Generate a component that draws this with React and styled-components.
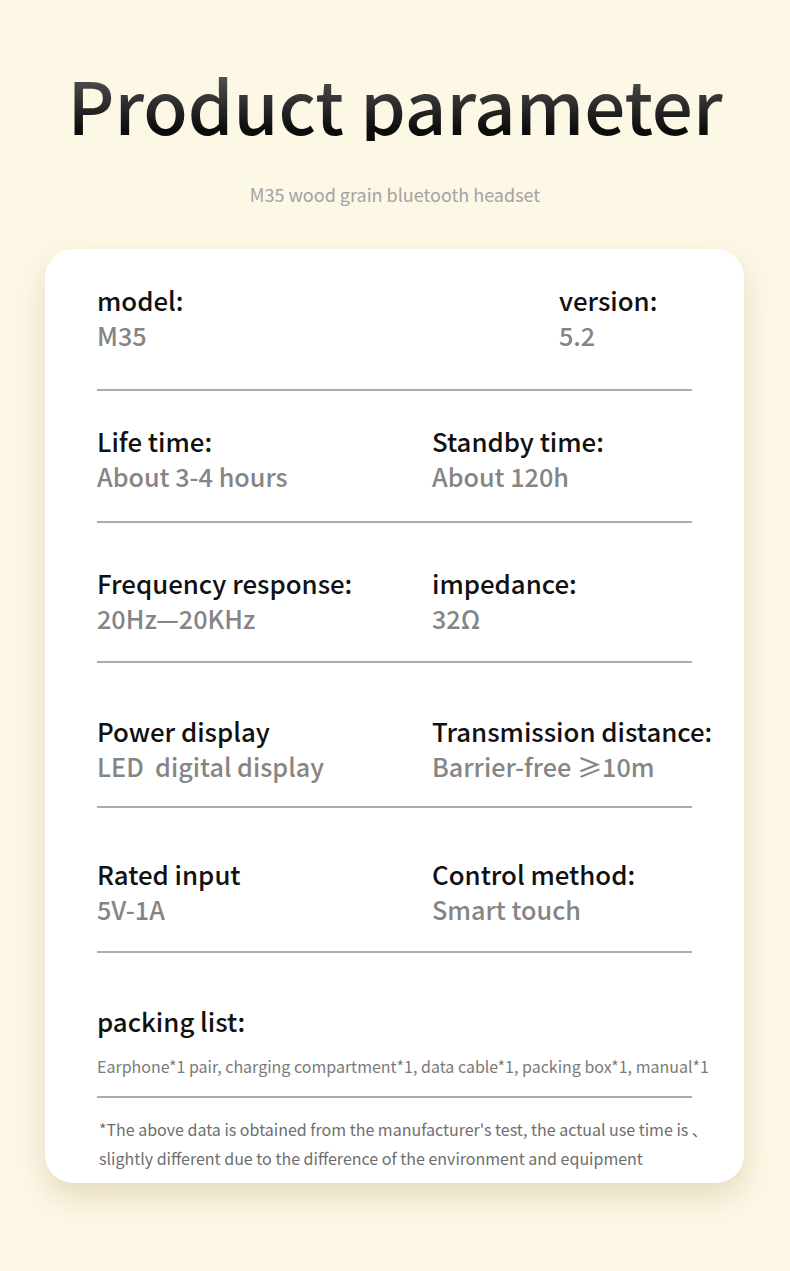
import React from "react";
import styled, { createGlobalStyle } from "styled-components";

const Global = createGlobalStyle`
  html, body { margin: 0; padding: 0; background: #fdf7e6; }
  body { font-family: "Noto Sans CJK SC", "Noto Sans", sans-serif; }
`;

const Page = styled.div`
  width: 790px;
  min-height: 1271px;
  background: #fdf7e6;
  padding-top: 67px;
  box-sizing: border-box;
`;

const Title = styled.h1`
  margin: 0;
  text-align: center;
  font-size: 72.5px;
  line-height: 74px;
  font-weight: 500;
  background: linear-gradient(180deg, #5c5c5c 0%, #0c0c0c 85%);
  -webkit-background-clip: text;
  background-clip: text;
  color: transparent;
`;

const Subtitle = styled.p`
  margin: 39px 0 0;
  text-align: center;
  font-size: 18px;
  line-height: 28px;
  color: #a3a3a3;
`;

const Card = styled.div`
  margin: 41px 46px 0 45px;
  background: #fff;
  border-radius: 28px;
  padding: 0 52px 10px;
  box-shadow: 0 14px 30px rgba(190, 175, 130, 0.38);
`;

const Section = styled.div`
  padding-top: ${(p) => p.$pt}px;
  padding-bottom: ${(p) => p.$pb}px;
  border-bottom: ${(p) => (p.$noLine ? "none" : "2px solid #acacac")};
`;

const Grid = styled.div`
  display: grid;
  grid-template-columns: ${(p) => p.$left || 335}px 1fr;
`;

const Field = styled.div`
  display: flex;
  flex-direction: column;
  white-space: nowrap;
`;

const Label = styled.div`
  font-size: 25.8px;
  line-height: 36px;
  font-weight: 500;
  color: #111;
`;

const Value = styled.div`
  font-size: 25.2px;
  line-height: 34px;
  font-weight: 500;
  color: #858585;
`;

const PackValue = styled.div`
  margin-top: 13px;
  font-size: 16px;
  line-height: 28px;
  color: #7a7a7a;
  white-space: nowrap;
`;

const Note = styled.p`
  margin: 0;
  padding-left: 2px;
  font-size: 16px;
  line-height: 29px;
  color: #6e6e6e;
  white-space: nowrap;
`;

const rows = [
  { pt: 33, pb: 37, left: 462, a: ["model:", "M35"], b: ["version:", "5.2"] },
  { pt: 32, pb: 28, a: ["Life time:", "About 3-4 hours"], b: ["Standby time:", "About 120h"] },
  { pt: 42, pb: 26, a: ["Frequency response:", "20Hz—20KHz"], b: ["impedance:", "32Ω"] },
  { pt: 50, pb: 23, a: ["Power display", "LED\u00a0 digital display"], b: ["Transmission distance:", "Barrier-free ≥10m"] },
  { pt: 48, pb: 25, a: ["Rated input", "5V-1A"], b: ["Control method:", "Smart touch"] },
];

export default function App() {
  return (
    <Page>
      <Global />
      <Title>Product parameter</Title>
      <Subtitle>M35 wood grain bluetooth headset</Subtitle>
      <Card>
        {rows.map((r, i) => (
          <Section key={i} $pt={r.pt} $pb={r.pb}>
            <Grid $left={r.left}>
              <Field>
                <Label>{r.a[0]}</Label>
                <Value>{r.a[1]}</Value>
              </Field>
              <Field>
                <Label>{r.b[0]}</Label>
                <Value>{r.b[1]}</Value>
              </Field>
            </Grid>
          </Section>
        ))}
        <Section $pt={50} $pb={16}>
          <Label>packing list:</Label>
          <PackValue>
            Earphone*1 pair, charging compartment*1, data cable*1, packing box*1, manual*1
          </PackValue>
        </Section>
        <Section $pt={17} $pb={0} $noLine>
          <Note>
            *The above data is obtained from the manufacturer's test, the actual use time is 、
            <br />
            slightly different due to the difference of the environment and equipment
          </Note>
        </Section>
      </Card>
    </Page>
  );
}
